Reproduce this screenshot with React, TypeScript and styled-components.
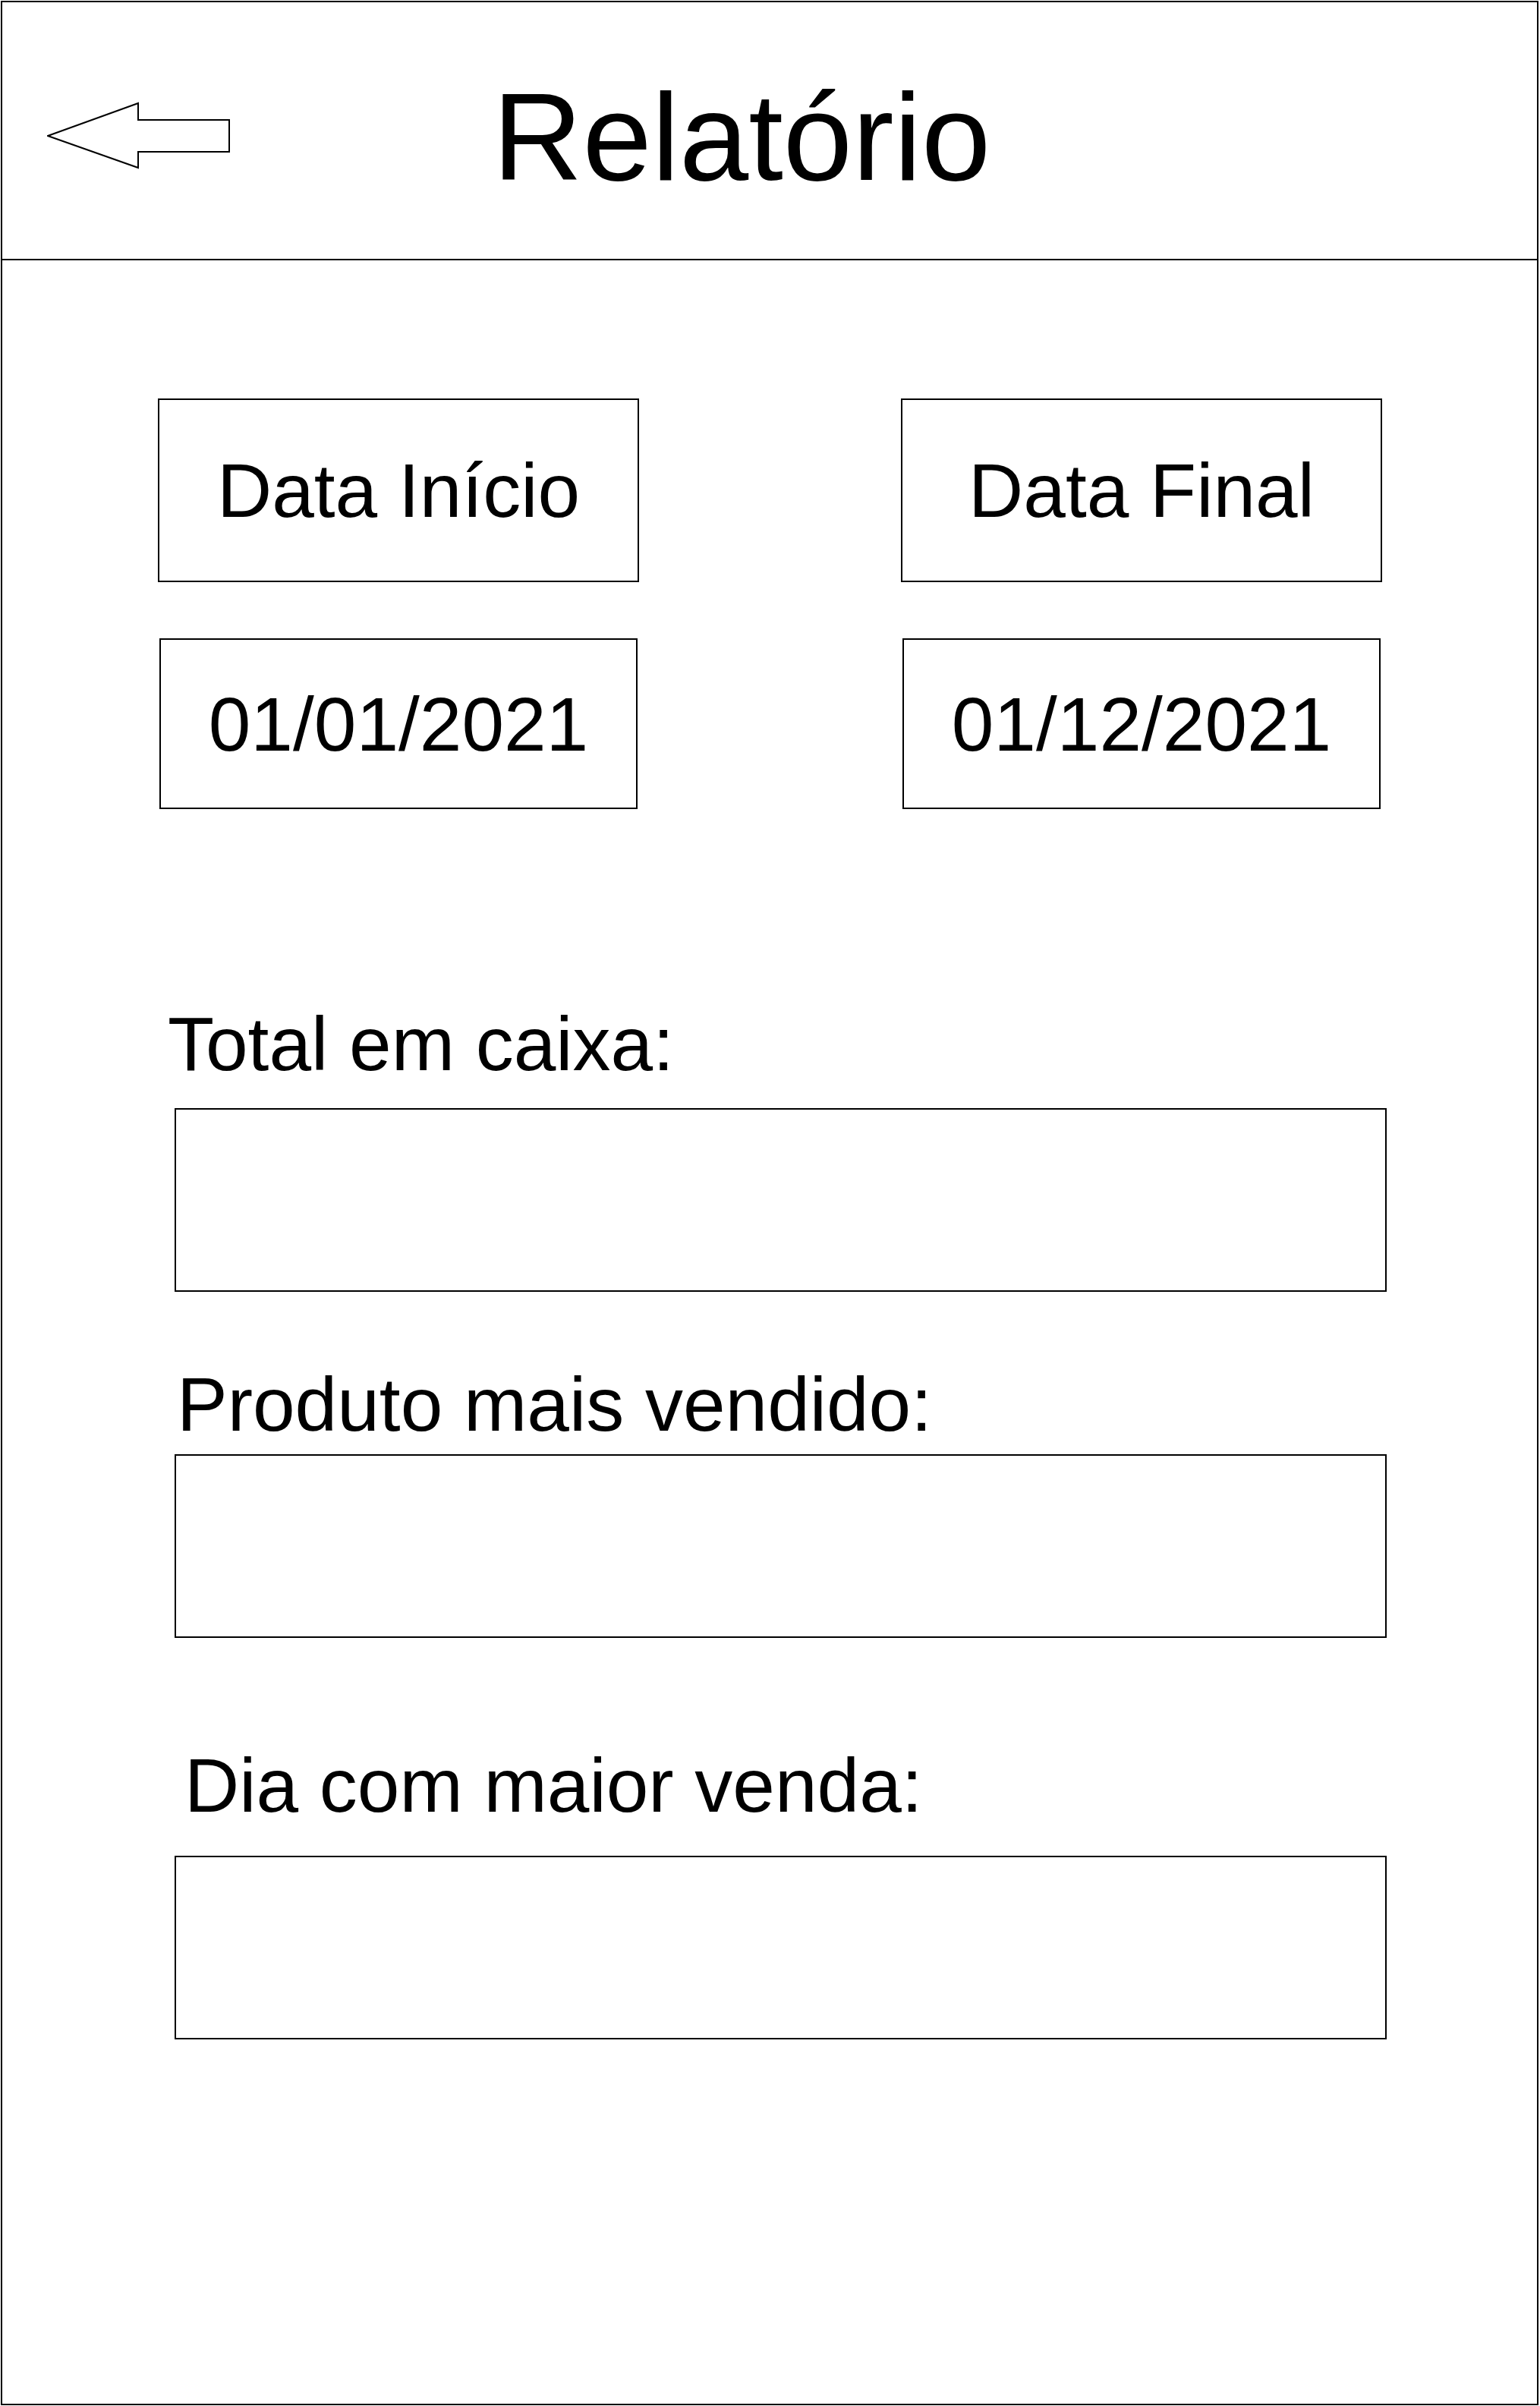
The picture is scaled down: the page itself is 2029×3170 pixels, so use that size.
import React from 'react';
import styled, { createGlobalStyle } from 'styled-components';

const GlobalStyle = createGlobalStyle`
  html, body {
    margin: 0;
    padding: 0;
    background: #ffffff;
  }
  body {
    font-family: 'Liberation Sans', Arial, sans-serif;
    color: #000000;
  }
  * {
    box-sizing: border-box;
  }
`;

interface Field {
  label: string;
  labelIndent: number;
  labelGap: number;
  top: number;
}

const FIELDS: Field[] = [
  { label: 'Total em caixa:', labelIndent: -9, labelGap: 35, top: 259 },
  { label: 'Produto mais vendido:', labelIndent: 3, labelGap: 16, top: 98 },
  { label: 'Dia com maior venda:', labelIndent: 13, labelGap: 43, top: 144 },
];

const BackArrow: React.FC = () => (
  <ArrowIcon width="242" height="90" viewBox="0 0 242 90">
    <polygon
      points="1,45 120,2 120,24 240,24 240,66 120,66 120,87"
      fill="#ffffff"
      stroke="#000000"
      strokeWidth="2"
      strokeLinejoin="miter"
    />
  </ArrowIcon>
);

const App: React.FC = () => {
  return (
    <>
      <GlobalStyle />
      <Frame>
        <Header>
          <BackArrow />
          <Title>Relatório</Title>
        </Header>

        <DatesRow>
          <DateColumn>
            <LabelBox>Data Início</LabelBox>
            <ValueBox>01/01/2021</ValueBox>
          </DateColumn>
          <DateColumn>
            <LabelBox>Data Final</LabelBox>
            <ValueBox>01/12/2021</ValueBox>
          </DateColumn>
        </DatesRow>

        <Fields>
          {FIELDS.map((field) => (
            <FieldGroup key={field.label} $top={field.top}>
              <FieldLabel $indent={field.labelIndent} $gap={field.labelGap}>
                {field.label}
              </FieldLabel>
              <FieldBox />
            </FieldGroup>
          ))}
        </Fields>
      </Frame>
    </>
  );
};

const Frame = styled.div`
  margin: 1px 0 0 1px;
  width: 2026px;
  height: 3168px;
  border: 2px solid #000000;
  display: flex;
  flex-direction: column;
`;

const Header = styled.header`
  flex-shrink: 0;
  height: 340px;
  border-bottom: 2px solid #000000;
  display: flex;
  align-items: flex-start;
  padding-left: 59px;
`;

const ArrowIcon = styled.svg`
  display: block;
  flex-shrink: 0;
  margin-top: 131px;
`;

const Title = styled.h1`
  margin: 96px 0 0 345px;
  font-size: 164px;
  font-weight: 400;
  line-height: 1;
  white-space: nowrap;
`;

const DatesRow = styled.div`
  display: flex;
  gap: 339px;
  padding-left: 202px;
  margin-top: 182px;
`;

const DateColumn = styled.div`
  width: 640px;
  display: flex;
  flex-direction: column;
  align-items: center;
  gap: 74px;
`;

const LabelBox = styled.div`
  width: 634px;
  height: 242px;
  border: 2px solid #000000;
  display: flex;
  align-items: center;
  justify-content: center;
  font-size: 100px;
  line-height: 1;
  white-space: nowrap;
`;

const ValueBox = styled(LabelBox)`
  width: 630px;
  height: 225px;
`;

const Fields = styled.div`
  display: flex;
  flex-direction: column;
  padding-left: 227px;
`;

const FieldGroup = styled.div<{ $top: number }>`
  display: flex;
  flex-direction: column;
  margin-top: ${({ $top }) => $top}px;
`;

const FieldLabel = styled.div<{ $indent: number; $gap: number }>`
  font-size: 100px;
  line-height: 1;
  white-space: nowrap;
  margin-left: ${({ $indent }) => $indent}px;
  margin-bottom: ${({ $gap }) => $gap}px;
`;

const FieldBox = styled.div`
  width: 1597px;
  height: 242px;
  border: 2px solid #000000;
`;

export default App;
